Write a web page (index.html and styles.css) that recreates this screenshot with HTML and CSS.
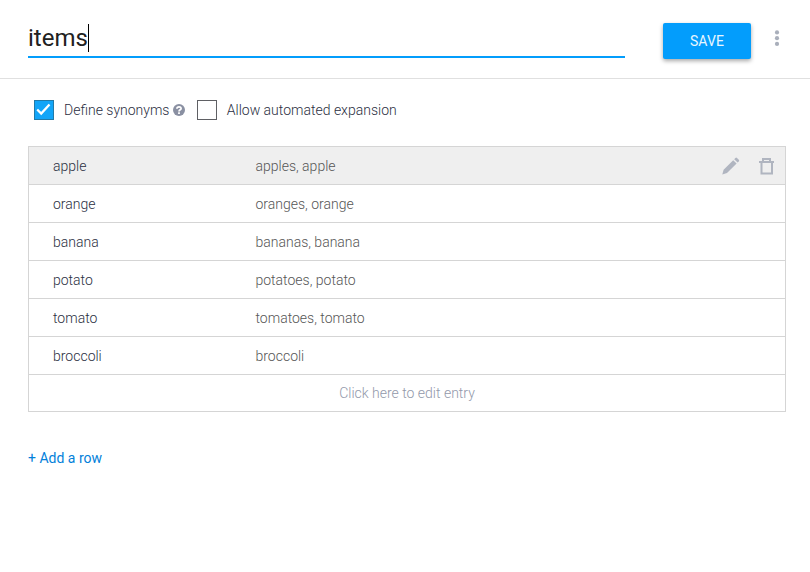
FILE: index.html
```html
<!DOCTYPE html>
<html lang="en">
<head>
<meta charset="utf-8">
<title>Entity editor</title>
<link rel="stylesheet" href="styles.css">
</head>
<body>
<header class="header">
  <div class="name-field"><span class="name">items</span><span class="caret"></span></div>
  <button class="save">SAVE</button>
  <svg class="more" width="6" height="16" viewBox="0 0 6 16" fill="#a9afbb"><circle cx="3" cy="2.4" r="2.1"/><circle cx="3" cy="8.2" r="2.1"/><circle cx="3" cy="13.9" r="2.1"/></svg>
</header>
<main class="content">
  <div class="options">
    <span class="box checked"><svg width="18" height="18" viewBox="0 0 18 18"><path d="M2.2 8.500l4 4L14.500 3.500" fill="none" stroke="#fff" stroke-width="2.3"/></svg></span>
    <span class="label define">Define synonyms</span>
    <svg class="help" width="12" height="12" viewBox="0 0 12 12"><circle cx="6" cy="6" r="6" fill="#8a90a2"/><path d="M3.900 4.700C4 2.100 8.200 2.200 8.100 4.600 8 5.800 6 5.700 6 7.400" fill="none" stroke="#fff" stroke-width="1.7"/><path d="M5.100 8.300h1.800v1.700H5.100z" fill="#fff"/></svg>
    <span class="box"></span>
    <span class="label allow">Allow automated expansion</span>
  </div>
  <div class="table">
    <div class="row active"><span class="key">apple</span><span class="values">apples, apple</span>
      <svg class="pencil" width="18" height="18" viewBox="0 0 18 18" fill="#b0b5c0"><path d="M.3 17.500l1.300-4.800L11.200 3.200l3.400 3.400L5 16.100zM12.200 2.200l1.200-1.200q.8-.8 1.600 0l1.800 1.800q.8.8 0 1.600l-1.200 1.200z"/></svg>
      <svg class="trash" width="16" height="18" viewBox="0 0 16 18"><path d="M0 5h15M4 4.500V2h7v2.500M2.500 5v11.500h10.500V5" fill="none" stroke="#b0b5c0" stroke-width="2"/></svg>
    </div>
    <div class="row"><span class="key">orange</span><span class="values">oranges, orange</span></div>
    <div class="row"><span class="key">banana</span><span class="values">bananas, banana</span></div>
    <div class="row"><span class="key">potato</span><span class="values">potatoes, potato</span></div>
    <div class="row"><span class="key">tomato</span><span class="values">tomatoes, tomato</span></div>
    <div class="row"><span class="key">broccoli</span><span class="values">broccoli</span></div>
    <div class="row empty">Click here to edit entry</div>
  </div>
  <a class="add">+ Add a row</a>
</main>
</body>
</html>
```
FILE: styles.css
```css
* { box-sizing: border-box; }
body {
  margin: 0;
  background: #fff;
  font: 300 14px/20px Roboto, "Liberation Sans", sans-serif;
  color: #2b2f42;
}
.header {
  display: flex;
  align-items: flex-start;
  height: 79px;
  padding: 23px 0 0 28px;
  border-bottom: 1px solid #e0e0e0;
}
.name-field {
  display: flex;
  width: 597px;
  height: 35px;
  border-bottom: 2px solid #039dfc;
}
.name { font-size: 24px; line-height: 30px; font-weight: 400; color: #212121; }
.caret { width: 1px; height: 28px; margin-top: 1px; background: #000; }
.save {
  width: 88px;
  height: 36px;
  margin: 0 0 0 38px;
  padding: 0;
  border: 0;
  border-radius: 2px;
  background: #039dfc;
  box-shadow: 0 2px 4px rgba(0, 0, 0, .35);
  color: #e8f6ff;
  font: 400 14px/36px Roboto, sans-serif;
  letter-spacing: .1px;
}
.more { margin: 7px 0 0 23px; }
.content { padding: 21px 24px 0 28px; }
.options { display: flex; align-items: center; height: 20px; padding-left: 6px; }
.box { width: 20px; height: 20px; border: 1px solid #5f6064; }
.checked { background: #12a5f8; border-color: #227aa8; }
.checked svg { display: block; }
.label { margin-left: 10px; white-space: nowrap; }
.allow { margin-left: 9.3px; }
.help { margin: 0 12px 0 4px; }
.table { margin-top: 26px; border: 1px solid #d5d5d5; }
.row {
  display: flex;
  align-items: center;
  height: 38px;
  padding: 1px 10px 0 24px;
  border-bottom: 1px solid #d5d5d5;
}
.active { background: #efefef; }
.key { width: 202.5px; }
.values { flex: 1; color: #565656; }
.pencil { margin-right: 19px; }
.empty { height: 36px; justify-content: center; padding: 0; border: 0; color: #9298aa; }
.add { display: inline-block; margin-top: 36px; font-weight: 400; color: #0280da; }
```
